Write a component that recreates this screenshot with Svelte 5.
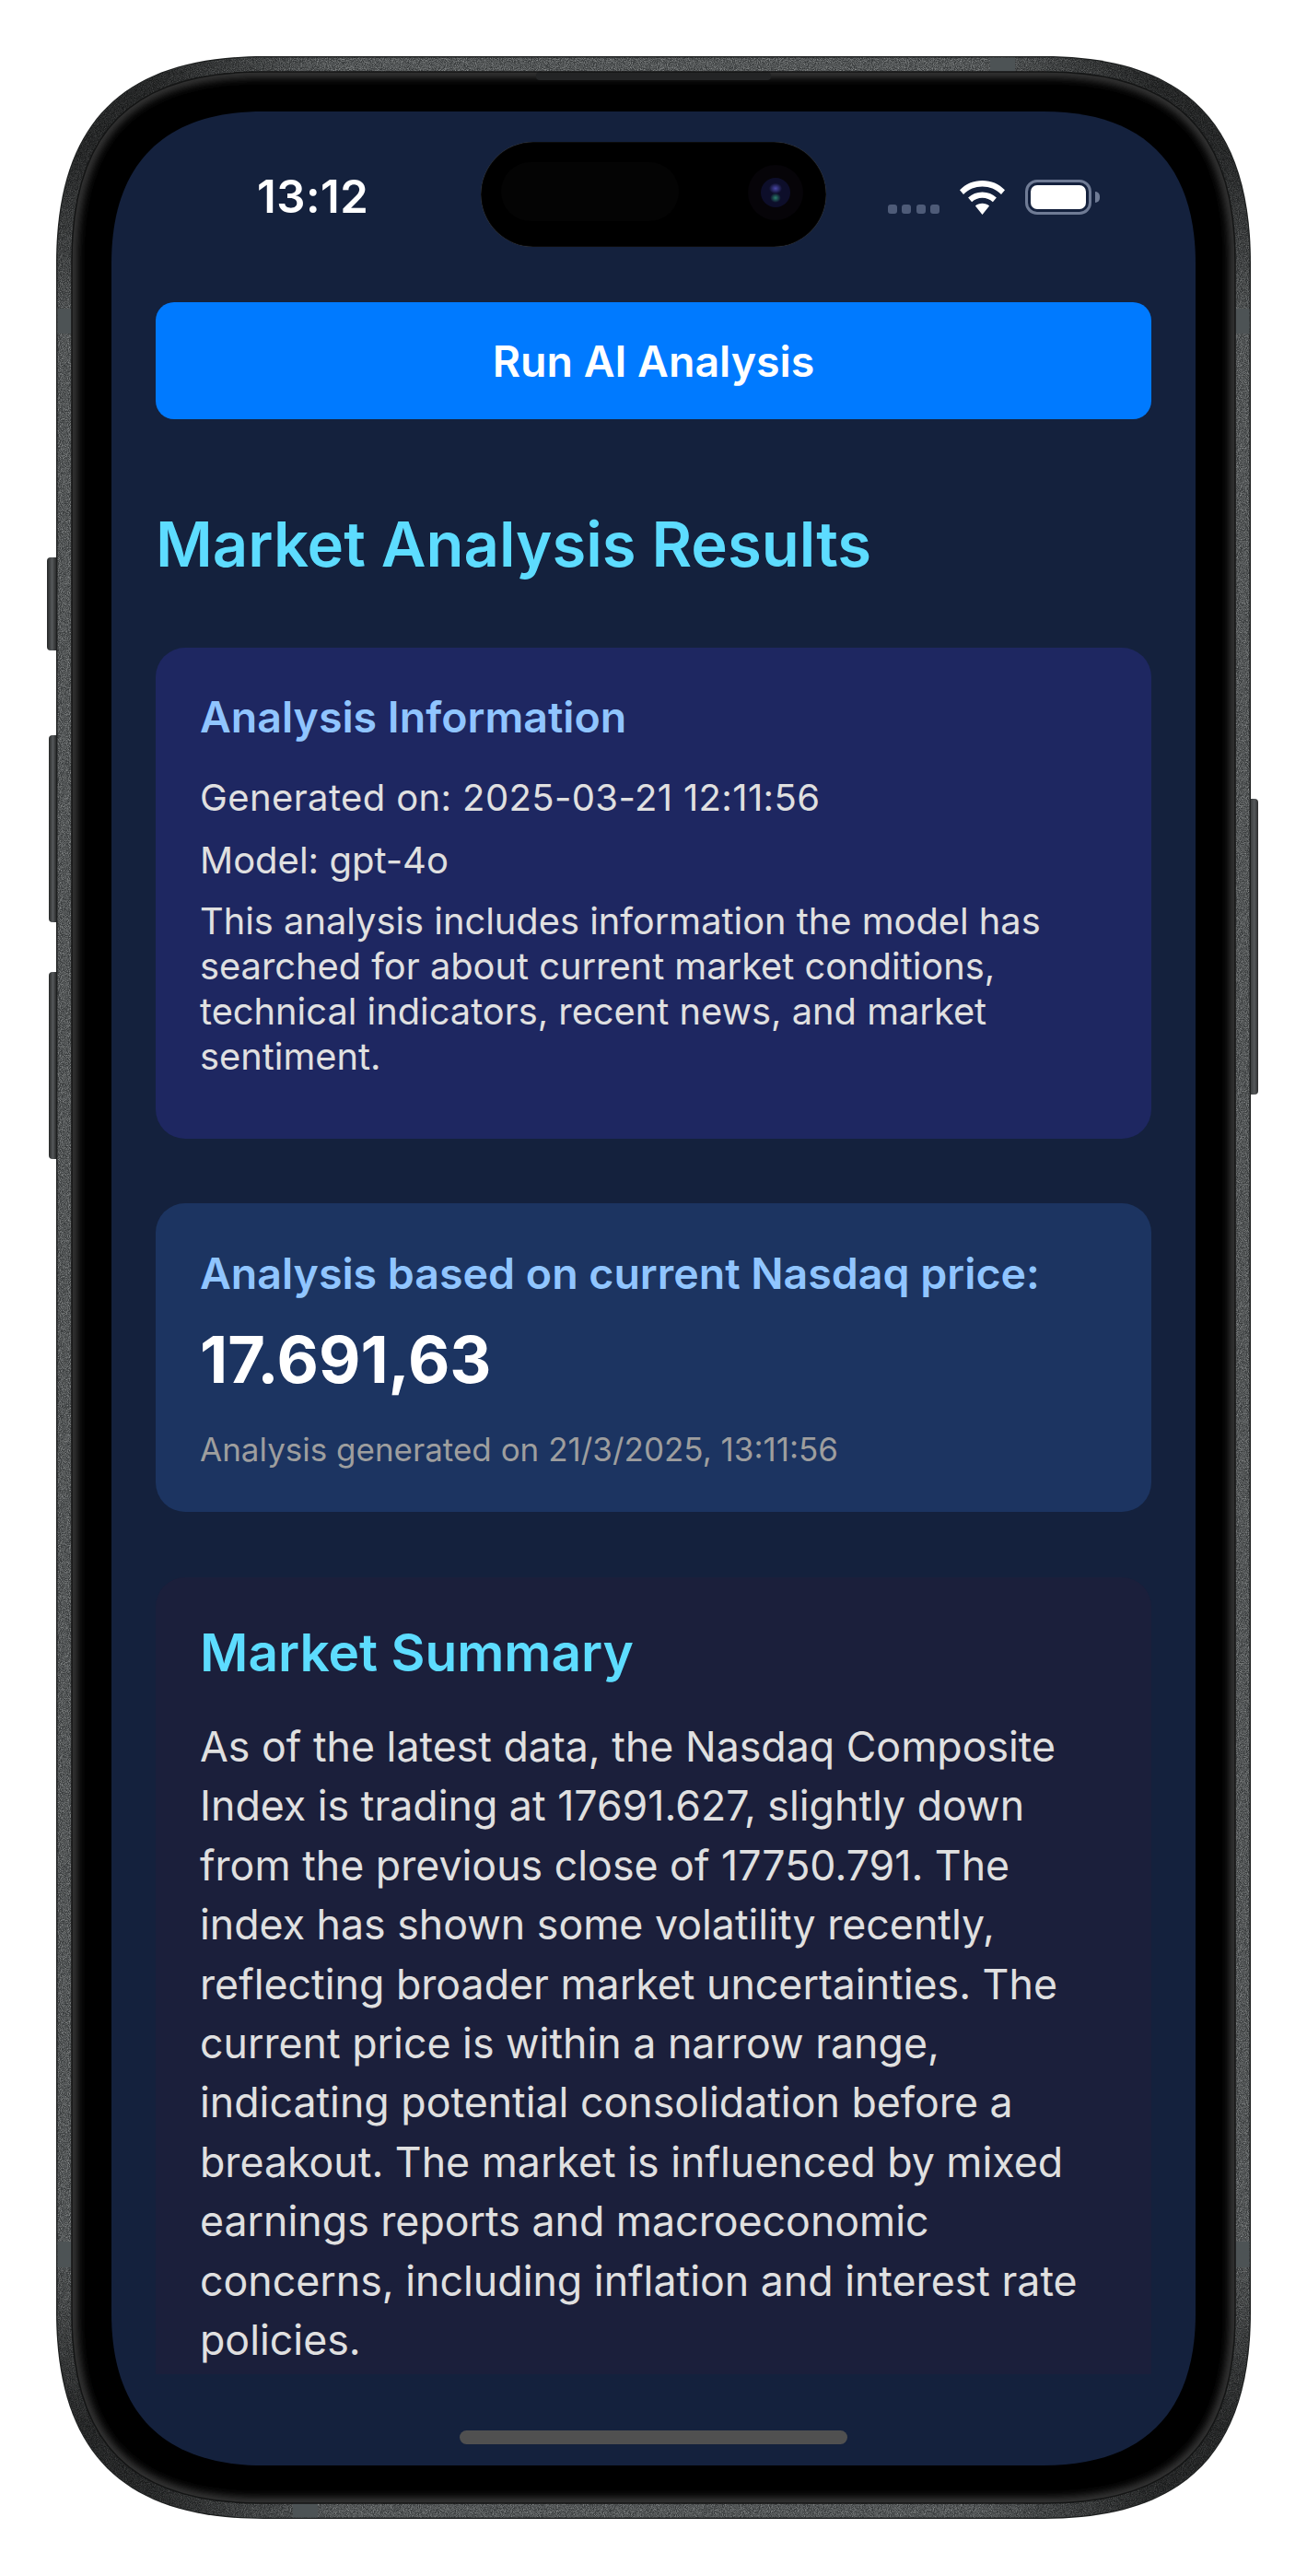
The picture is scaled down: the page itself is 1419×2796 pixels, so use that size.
<script>
  const summary = "As of the latest data, the Nasdaq Composite Index is trading at 17691.627, slightly down from the previous close of 17750.791. The index has shown some volatility recently, reflecting broader market uncertainties. The current price is within a narrow range, indicating potential consolidation before a breakout. The market is influenced by mixed earnings reports and macroeconomic concerns, including inflation and interest rate policies.";

  // Squircle outline of the device body: R is where the curve starts, a shapes the shoulder.
  function squircle(x, y, w, h, R, a) {
    const r = x + w, b = y + h;
    return `M${x} ${y + R}C${x} ${y + a} ${x + a} ${y} ${x + R} ${y}H${r - R}C${r - a} ${y} ${r} ${y + a} ${r} ${y + R}V${b - R}C${r} ${b - a} ${r - a} ${b} ${r - R} ${b}H${x + R}C${x + a} ${b} ${x} ${b - a} ${x} ${b - R}Z`;
  }
  const body = squircle(0, 0, 1297, 2673, 225, 72);
  const metal = squircle(1.5, 1.5, 1294, 2670, 223, 71);
  const bezel = squircle(17, 17, 1263, 2639, 205, 65);
  const corners = [[0, 0], [1297, 0], [0, 2673], [1297, 2673]];
  const bands = [[1014, 0, 27, 17], [257, 2656, 27, 17], [0, 274, 17, 27], [1280, 274, 17, 27], [0, 2372, 17, 28], [1280, 2372, 17, 28]];
</script>

<div class="page">
  <div class="phone">
    <span class="side action"></span>
    <span class="side volup"></span>
    <span class="side voldown"></span>
    <span class="side power"></span>

    <svg class="frame" viewBox="0 0 1297 2673" aria-hidden="true">
      <defs>
        <filter id="grain" x="0" y="0" width="100%" height="100%">
          <feTurbulence type="fractalNoise" baseFrequency="1.1" numOctaves="2" seed="4" />
          <feColorMatrix values="0 0 0 0 .62  0 0 0 0 .64  0 0 0 0 .64  0 0 0 1 -.32" />
        </filter>
        <filter id="soft"><feGaussianBlur stdDeviation="5" /></filter>
        <clipPath id="bodyClip"><path d={metal} /></clipPath>
        <clipPath id="bezelClip"><path d={bezel} /></clipPath>
        <radialGradient id="cornerShade">
          <stop offset="0.35" stop-color="#000" stop-opacity=".55" />
          <stop offset="1" stop-color="#000" stop-opacity="0" />
        </radialGradient>
      </defs>
      <path d={body} fill="#1d1f1f" />
      <path d={metal} fill="#383b3c" />
      <g clip-path="url(#bodyClip)">
        <rect width="1297" height="2673" filter="url(#grain)" />
        {#each corners as [cx, cy]}
          <circle {cx} {cy} r="300" fill="url(#cornerShade)" />
        {/each}
        {#each bands as [x, y, w, h]}
          <rect {x} {y} width={w} height={h} fill="#4d5355" />
        {/each}
      </g>
      <path d={bezel} fill="#000" />
      <g clip-path="url(#bezelClip)">
        <path d={bezel} fill="none" stroke="#3a3b3b" stroke-width="12" filter="url(#soft)" />
        <rect x="521" y="17" width="255" height="9" rx="4" fill="#232425" />
      </g>
      <path d={bezel} fill="none" stroke="#141515" stroke-width="1.500" />
    </svg>

    <div class="screen">
      <div class="status">
        <span class="time">13:12</span>
        <div class="status-icons">
          <div class="dots"><i></i><i></i><i></i><i></i></div>
          <svg class="wifi" viewBox="0 0 49 37" aria-hidden="true">
            <path d="M24.500 0C15 0 6.500 3.500 0 10.300l4 4.600C9.800 9.300 16.800 6.500 24.500 6.500s14.700 2.800 20.500 8.400l4-4.600C42.500 3.500 34 0 24.500 0z" />
            <path d="M24.500 12.500c-6 0-11.200 2.200-15.400 6.100l4 4.700c3.200-2.900 7-4.500 11.400-4.500s8.200 1.600 11.400 4.500l4-4.700c-4.200-3.900-9.400-6.100-15.400-6.100z" />
            <path d="M24.500 24.800c-3 0-5.600 1-7.600 2.800L24.500 37l7.600-9.400c-2-1.800-4.600-2.800-7.600-2.800z" />
          </svg>
          <div class="battery"><div class="level"></div></div>
        </div>
      </div>
      <div class="island">
        <span class="sensor"></span>
        <span class="camera"><span class="lens"></span></span>
      </div>

      <div class="content">
        <button class="run">Run AI Analysis</button>
        <h1>Market Analysis Results</h1>

        <section class="card info">
          <h3>Analysis Information</h3>
          <p class="line stampline">Generated on: 2025-03-21 12:11:56</p>
          <p class="line">Model: gpt-4o</p>
          <p class="note">This analysis includes information the model has searched for about current market conditions, technical indicators, recent news, and market sentiment.</p>
        </section>

        <section class="card price">
          <h3>Analysis based on current Nasdaq price:</h3>
          <div class="value">17.691,63</div>
          <p class="stamp">Analysis generated on 21/3/2025, 13:11:56</p>
        </section>

        <section class="card summary">
          <h2>Market Summary</h2>
          <p>{summary}</p>
        </section>
      </div>

      <div class="home"><span></span></div>
    </div>
  </div>
</div>

<style>
  :global(body) { margin: 0; background: #fff; }
  .page { width: 1419px; height: 2796px; padding: 61px 0 0 61px; box-sizing: border-box; font-family: Inter, "Noto Sans", sans-serif; }
  .phone { position: relative; box-sizing: border-box; width: 1297px; height: 2673px; padding: 60px; }
  .frame { position: absolute; inset: 0; width: 100%; height: 100%; }
  .side { position: absolute; background: linear-gradient(90deg, #262828, #55585a 55%, #2b2c2d); border-radius: 4px 0 0 4px; }
  .action { left: -10px; top: 544px; width: 10px; height: 101px; }
  .volup { left: -8px; top: 737px; width: 8px; height: 203px; }
  .voldown { left: -8px; top: 994px; width: 8px; height: 203px; }
  .power { right: -8px; top: 806px; width: 8px; height: 321px; border-radius: 0 4px 4px 0; background: linear-gradient(90deg, #3d4041, #55585a 50%, #2b2c2d); }

  .screen { position: relative; display: flex; flex-direction: column; width: 1177px; height: 2555px; background: #14213d; overflow: hidden;
    clip-path: path("M0 165C0 57 57 0 165 0H1012C1120 0 1177 57 1177 165V2390C1177 2498 1120 2555 1012 2555H165C57 2555 0 2498 0 2390Z"); }
  .status { display: flex; justify-content: space-between; height: 207px; flex: none; box-sizing: border-box; padding: 64px 113px 0 158px; }
  .time { color: #fff; font-size: 49px; line-height: 58px; font-weight: 600; letter-spacing: .5px; }
  .status-icons { display: flex; align-items: flex-start; }
  .dots { display: flex; gap: 5.500px; margin-top: 37px; margin-right: 22px; }
  .dots i { width: 10px; height: 10px; border-radius: 3px; background: #4e5b78; }
  .wifi { width: 49px; height: 37px; margin-top: 11px; margin-right: 22px; fill: #fff; }
  .battery { position: relative; box-sizing: border-box; width: 72px; height: 38px; margin-top: 10px; padding: 3px; border: 3px solid #6f7b95; border-radius: 13px; }
  .battery::after { content: ""; position: absolute; right: -12px; top: 10px; width: 5px; height: 12px; background: #6f7b95; border-radius: 0 6px 6px 0; }
  .level { height: 100%; background: #fff; border-radius: 7px; }

  .island { position: absolute; left: 401px; top: 33px; width: 375px; height: 114px; border-radius: 57px; background: #000; box-shadow: inset 0 0 1px rgba(255, 255, 255, .45); }
  .sensor { position: absolute; left: 22px; top: 22px; width: 193px; height: 64px; border-radius: 32px; background: #040404; }
  .camera { position: absolute; left: 290px; top: 25px; width: 60px; height: 60px; border-radius: 50%; background: #060408; }
  .lens { position: absolute; left: 14px; top: 14px; width: 32px; height: 32px; border-radius: 50%; background: radial-gradient(ellipse 22% 18% at 50% 36%, #4a48a8, transparent), radial-gradient(ellipse 18% 16% at 50% 68%, #2a7f6c, transparent), #0d0e2a; }

  .content { flex: 1; min-height: 0; box-sizing: border-box; padding: 0 48px; overflow: hidden; display: flex; flex-direction: column; }
  .run { flex: none; width: 100%; height: 127px; border: 0; border-radius: 20px; background: #007aff; color: #fff; font: 600 46.500px Inter, sans-serif; }
  h1 { margin: 97px 0 0; color: #5ddcff; font-size: 67px; line-height: 78px; font-weight: 600; }
  .card { flex: none; box-sizing: border-box; border-radius: 32px; padding: 48px 48px 0; }
  h3 { margin: 0; color: #90c5ff; font-size: 46.500px; line-height: 54px; font-weight: 600; }

  .info { margin-top: 73px; height: 533px; background: #1e2761; }
  .line { margin: 0; color: #e0e0e0; font-size: 40px; line-height: 48px; }
  .stampline { letter-spacing: .38px; }
  .info h3 + .line { margin-top: 37px; }
  .line + .line { margin-top: 20px; }
  .note { margin: 17px 0 0; color: #e0e0e0; font-size: 39.800px; line-height: 49px; }

  .price { margin-top: 70px; height: 335px; background: #1c3461; padding-top: 49px; }
  .value { margin-top: 23px; color: #fff; font-size: 70px; line-height: 88px; font-weight: 700; }
  .stamp { margin: 33px 0 0; color: #9e9e9e; font-size: 35px; line-height: 40px; }

  .summary { margin-top: 71px; flex: 1 0 auto; background: #1b1f3b; padding-top: 48px; border-radius: 32px 32px 0 0; }
  .summary h2 { margin: 0; color: #5ddcff; font-size: 56.800px; line-height: 68px; font-weight: 600; }
  .summary p { margin: 36px 0 0; color: #e0e0e0; font-size: 44.700px; line-height: 64.400px; }

  .home { flex: none; height: 99px; box-sizing: border-box; padding-top: 61px; display: flex; justify-content: center; }
  .home span { width: 421px; height: 15px; border-radius: 8px; background: #505050; }
</style>
